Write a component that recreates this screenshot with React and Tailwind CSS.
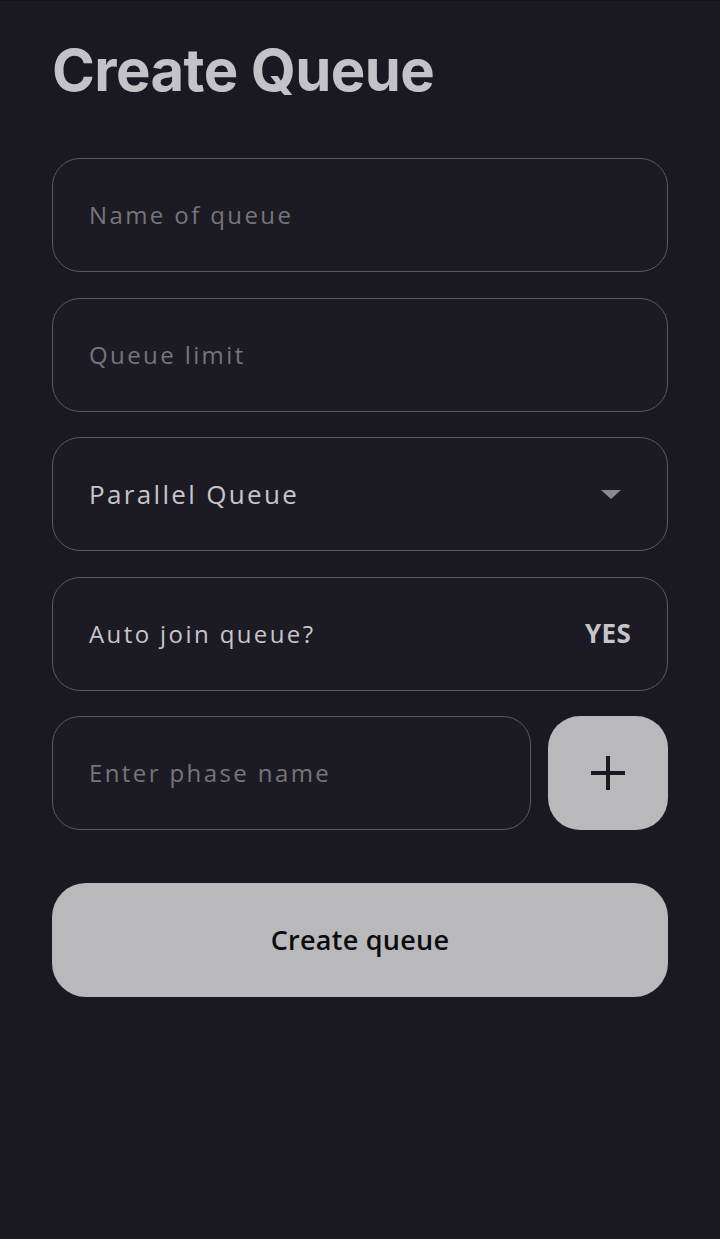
import { useState } from 'react';

const font = { fontFamily: '"Open Sans", "Noto Sans", sans-serif' };

const Field = ({ placeholder, value, large, right, className = '' }) => (
  <div
    className={`flex h-[114px] items-center justify-between rounded-[28px] border border-[#5c5b63] bg-[#1c1b23] pl-[36px] pr-[36px] ${className}`}
  >
    {value ? (
      <span
        className={`${large ? 'text-[26px] tracking-[0.09em]' : 'text-[24px] tracking-[0.1em]'} text-[#c6c5cb]`}
      >
        {value}
      </span>
    ) : (
      <span className="text-[24px] tracking-[0.1em] text-[#76757b]">{placeholder}</span>
    )}
    {right}
  </div>
);

export default function App() {
  const [autoJoin] = useState(true);

  return (
    <div className="min-h-[1239px] w-[720px] border-t border-[#121118] bg-[#1a1921]" style={font}>
      <div className="px-[52px] pt-[31px]">
        <h1
          className="text-[58px] font-bold leading-[76px] tracking-[-0.01em] text-[#c3c2c7]"
          style={{ fontFamily: 'Inter, "Noto Sans", sans-serif' }}
        >
          Create Queue
        </h1>

        <div className="mt-[50px] flex flex-col gap-[25.5px]">
          <Field placeholder="Name of queue" />
          <Field placeholder="Queue limit" />
          <Field
            value="Parallel Queue"
            large
            right={
              <svg width="20" height="10" viewBox="0 0 20 10" className="mr-[10px] mt-[2px]">
                <path d="M0 0 L20 0 L10 9 Z" fill="#8a898f" />
              </svg>
            }
          />
          <Field
            value="Auto join queue?"
            right={
              <span className="text-[26px] font-bold tracking-[0.01em] text-[#c6c5cb]">
                {autoJoin ? 'YES' : 'NO'}
              </span>
            }
          />
          <div className="flex gap-[17px]">
            <Field placeholder="Enter phase name" className="flex-1" />
            <button className="flex h-[114px] w-[120px] items-center justify-center rounded-[32px] bg-[#b9b9bb]">
              <svg width="38" height="38" viewBox="0 0 38 38">
                <path d="M19 2 V36 M2 19 H36" stroke="#1a1921" strokeWidth="4" />
              </svg>
            </button>
          </div>
        </div>

        <button className="mt-[53px] flex h-[114px] w-full items-center justify-center rounded-[34px] bg-[#b9b9bb]">
          <span className="text-[27px] font-semibold tracking-[0.01em] text-[#0c0c0f]">Create queue</span>
        </button>
      </div>
    </div>
  );
}
